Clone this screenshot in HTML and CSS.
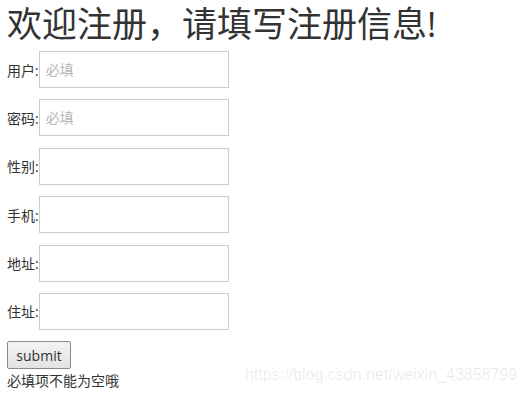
FILE: index.html
```html
<!DOCTYPE html>
<html lang="zh">
<head>
<meta charset="utf-8">
<title>注册</title>
<link rel="stylesheet" href="styles.css">
</head>
<body>
<h1 class="title">欢迎注册，请填写注册信息!</h1>
<form class="form">
  <div class="row"><label class="label">用户:</label><input class="field" type="text" placeholder="必填"></div>
  <div class="row"><label class="label">密码:</label><input class="field" type="password" placeholder="必填"></div>
  <div class="row"><label class="label">性别:</label><input class="field" type="text"></div>
  <div class="row"><label class="label">手机:</label><input class="field" type="text"></div>
  <div class="row"><label class="label">地址:</label><input class="field" type="text"></div>
  <div class="row"><label class="label">住址:</label><input class="field" type="text"></div>
  <div class="actions"><button class="btn" type="button">submit</button></div>
  <p class="note">必填项不能为空哦</p>
</form>
<div class="watermark">https://blog.csdn.net/weixin_43858799</div>
</body>
</html>
```
FILE: styles.css
```css
html, body {
  margin: 0;
  padding: 0;
  background: #fff;
}
body {
  padding: 0 7px;
  font-family: "Open Sans", "Noto Sans CJK SC", sans-serif;
  color: #333;
  font-size: 14px;
}
.title {
  margin: 0;
  padding-top: 2px;
  font-size: 35px;
  font-weight: 400;
  line-height: 44px;
  color: #333;
  font-family: "Open Sans", "Noto Sans CJK SC", sans-serif;
}
.form {
  margin-top: 5px;
  display: flex;
  flex-direction: column;
  gap: 11.4px;
}
.row {
  display: flex;
  align-items: center;
  height: 37px;
}
.label {
  font-size: 14px;
  color: #333;
}
.field {
  box-sizing: border-box;
  width: 190px;
  height: 37px;
  margin: 0;
  border: 1px solid #ccc;
  padding: 0 6px;
  font-family: "Open Sans", "Noto Sans CJK SC", sans-serif;
  font-size: 14px;
  color: #333;
  outline: none;
}
.field::placeholder {
  color: #b5b5b5;
}
.actions {
  display: flex;
}
.btn {
  box-sizing: border-box;
  height: 28px;
  width: 64px;
  padding: 0;
  border: 1px solid #8a8a8a;
  border-radius: 2px;
  background: linear-gradient(#f3f3f3, #e3e3e3);
  font-family: "Open Sans", sans-serif;
  font-size: 14px;
  color: #333;
}
.note {
  margin: -11.4px 0 0;
  padding-top: 3px;
  font-size: 14px;
  line-height: 18px;
}
.watermark {
  position: absolute;
  left: 245px;
  top: 366px;
  font-family: "Liberation Sans", sans-serif;
  font-size: 16px;
  color: rgba(0, 0, 0, 0.09);
  pointer-events: none;
}
```
